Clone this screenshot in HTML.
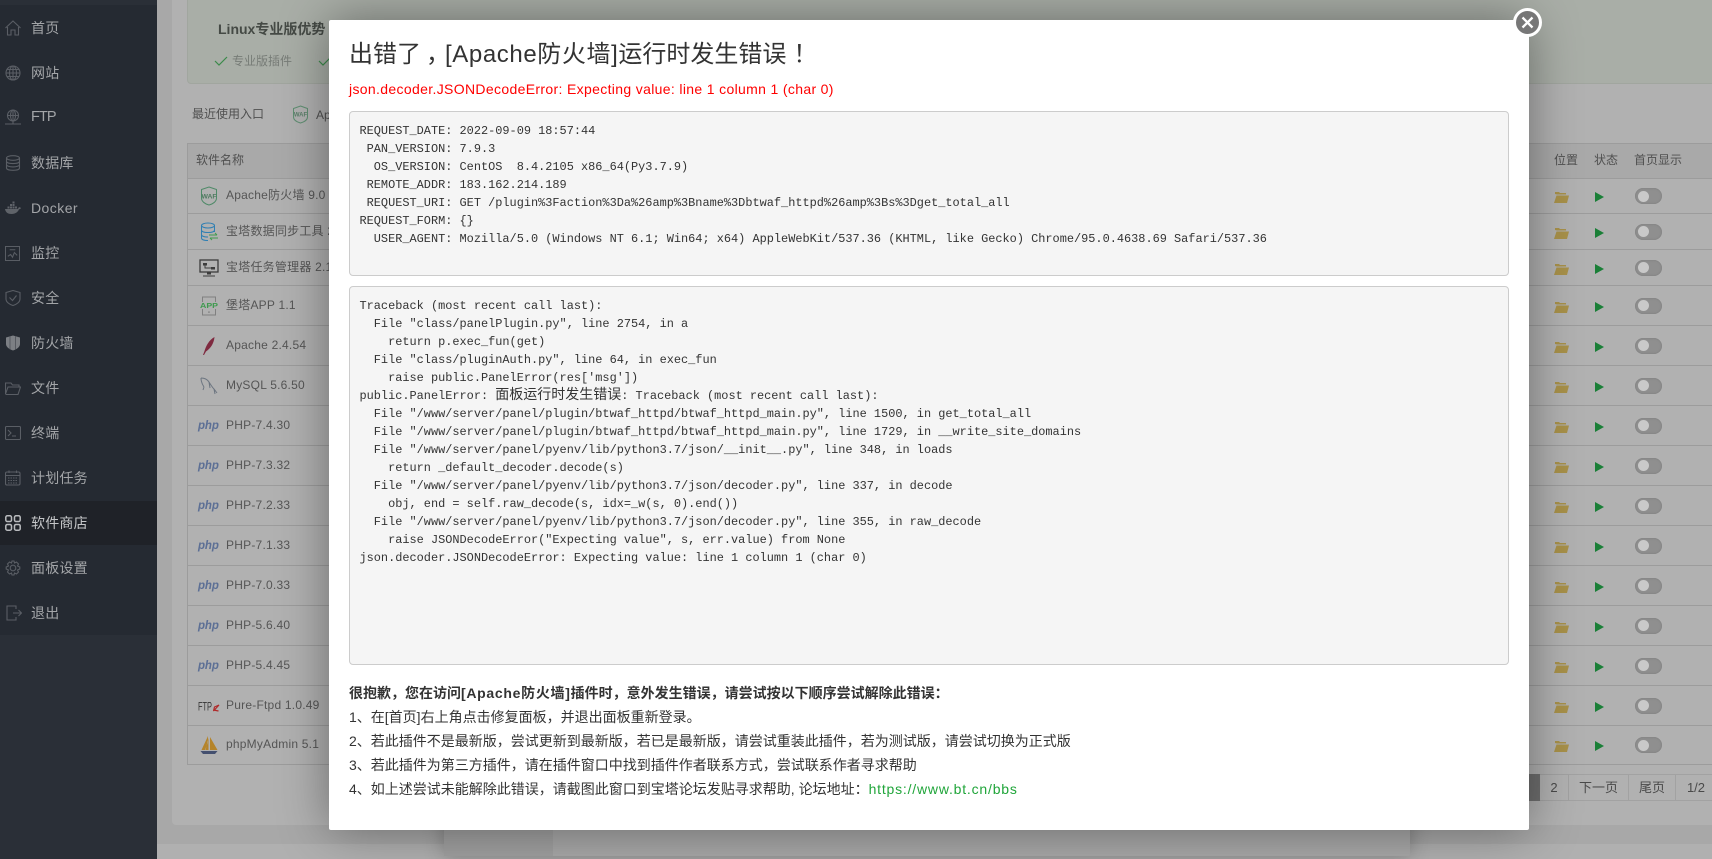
<!DOCTYPE html>
<html lang="zh-CN">
<head>
<meta charset="utf-8">
<title>软件商店</title>
<style>
*{box-sizing:border-box}
html,body{margin:0;padding:0;width:1712px;height:859px;overflow:hidden;background:#a8a8a8;font-family:"Liberation Sans","Noto Sans CJK SC",sans-serif;color:#4c4c4c}
.a{position:absolute}
#side{left:0;top:0;width:157px;height:859px;background:#2a2f37}
#menu{left:0;top:5px;width:157px;height:630px;background:#252a32}
#act{left:0;top:501px;width:157px;height:44px;background:#1f2228}
.m{position:absolute;left:31px;font-size:14px;line-height:20px;color:#a3a5a8;letter-spacing:.2px;white-space:nowrap}
.i{position:absolute;left:5px;width:16px;height:16px;fill:none;stroke:#5a5e65;stroke-width:1.1}
#panel{left:172px;top:-5px;width:1560px;height:830px;background:#b1b1b1;border-radius:4px}
#strip{left:157px;top:844px;width:1555px;height:15px;background:#b0b0b0}
#green{left:187px;top:-4px;width:1540px;height:88px;background:#a9aea7;border:1px solid #a1a69f;border-radius:4px}
.t{position:absolute;white-space:nowrap;font-size:12px;line-height:16px;color:#505050}
#thead{left:187px;top:143px;width:1540px;height:35px;background:#a9a9a9;border:1px solid #9c9c9c;border-bottom:0;border-right:0}
.r{position:absolute;left:187px;width:1540px;border-left:1px solid #9c9c9c;border-top:1px solid #9c9c9c}
.n{position:absolute;left:38px;top:50%;transform:translateY(-50%);font-size:12px;letter-spacing:.22px;color:#555;white-space:nowrap;line-height:16px;padding-bottom:2px}
.f{position:absolute;left:1366px;top:50%;margin-top:-5px;width:15px;height:12px}
.p{position:absolute;left:1407px;top:50%;margin-top:-4px;width:0;height:0;border-left:9px solid #1a7f37;border-top:5.5px solid transparent;border-bottom:5.5px solid transparent}
.s{position:absolute;left:1447px;top:50%;margin-top:-8px;width:27px;height:16px;border-radius:8px;background:#8f8f8f;box-shadow:inset 0 0 2px #7a7a7a}
.s:before{content:"";position:absolute;left:2.5px;top:2.5px;width:11px;height:11px;border-radius:50%;background:#c9c9c9}
.ic{position:absolute;left:11px;top:50%;transform:translateY(-50%);width:20px;height:20px}
.php{position:absolute;left:10px;top:50%;transform:translateY(-50%);font:italic bold 11.5px/14px "Liberation Sans",sans-serif;color:#5c6f95;letter-spacing:-.1px}
.pg{position:absolute;top:774px;height:27px;border:1px solid #a2a2a2;border-left:0;font-size:13px;line-height:25px;text-align:center;color:#4a4a4a;white-space:nowrap}
#back{left:444px;top:780px;width:966px;height:76px;background:#a8a8a8;border-radius:2px;box-shadow:0 0 20px rgba(0,0,0,.25)}
#backl{left:444px;top:780px;width:109px;height:76px;background:#a0a0a0}
#modal{left:329px;top:20px;width:1200px;height:810px;background:#fff;border-radius:2px;box-shadow:0 0 50px rgba(0,0,0,.4)}
#title{left:349px;top:37px;font-size:24px;line-height:36px;color:#333;white-space:nowrap}
#err{left:349px;top:79px;font-size:14px;line-height:20px;color:#f00;white-space:nowrap;letter-spacing:.34px}
pre{position:absolute;left:349px;width:1160px;margin:0;padding:9.5px;background:#f5f5f5;border:1px solid #ccc;border-radius:4px;font-family:"Liberation Mono","Noto Sans CJK SC",monospace;font-size:11.92px;line-height:18px;color:#333;overflow:hidden}
pre span{font-family:"Noto Sans CJK SC",sans-serif;font-size:14px;line-height:14px}
.l{position:absolute;left:349px;font-size:14px;line-height:24px;color:#333;white-space:nowrap}
#close{left:1512.5px;top:7.5px;width:29px;height:29px;border-radius:50%;background:#777;border:3px solid #fff}
</style>
</head>
<body>
<svg width="0" height="0" style="position:absolute">
<defs>
<symbol id="fo" viewBox="0 0 15 12"><path d="M1 3V1h4l1 1h6v1.500H3L1 3z" fill="#a8914a"/><path d="M2.500 4.500H15L13 12H0z" fill="#a8914a"/></symbol>
</defs>
</svg>

<div class="a" id="panel"></div>
<div class="a" id="strip"></div>
<div class="a" id="green"></div>
<div class="t" style="left:218px;top:21px;font-size:14px;line-height:16px;font-weight:bold;color:#454a45">Linux专业版优势</div>
<svg class="a" style="left:214px;top:55px" width="14" height="12" viewBox="0 0 14 12"><path d="M1 6l4 4 8-8" fill="none" stroke="#3b8a4a" stroke-width="1.2"/></svg>
<div class="t" style="left:232px;top:53px;color:#777c77">专业版插件</div>
<svg class="a" style="left:318px;top:55px" width="14" height="12" viewBox="0 0 14 12"><path d="M1 6l4 4 8-8" fill="none" stroke="#3b8a4a" stroke-width="1.2"/></svg>

<div class="t" style="left:192px;top:106px">最近使用入口</div>
<svg class="a" style="left:292px;top:105px" width="17" height="19" viewBox="0 0 17 19"><path d="M8.500 1L15.500 3.500V12C15.500 15 12 17 8.500 18C5 17 1.500 15 1.500 12V3.500Z" fill="none" stroke="#5f8f72" stroke-width="1"/><text x="8.500" y="11.500" font-size="6" font-weight="bold" text-anchor="middle" fill="#5b7f6a" font-family="Liberation Sans">WAF</text></svg>
<div class="t" style="left:316px;top:107px">Ap</div>

<div class="a" id="thead"></div>
<div class="t" style="left:196px;top:152px">软件名称</div>
<div class="t" style="left:1554px;top:152px">位置</div>
<div class="t" style="left:1594px;top:152px">状态</div>
<div class="t" style="left:1634px;top:152px">首页显示</div>

<div class="r" style="top:178px;height:35px"><svg class="ic" viewBox="0 0 20 20"><path d="M10 1L17.500 3.500V12C17.500 15.500 14 18 10 19C6 18 2.500 15.500 2.500 12V3.500Z" fill="none" stroke="#4f8a68" stroke-width="1"/><text x="10" y="12.500" font-size="6.800" font-weight="bold" text-anchor="middle" fill="#4f7a60" font-family="Liberation Sans">WAF</text></svg><div class="n">Apache防火墙 9.0</div><svg class="f"><use href="#fo"/></svg><div class="p"></div><div class="s"></div></div>
<div class="r" style="top:213px;height:36px"><svg class="ic" viewBox="0 0 20 20"><g fill="none" stroke="#2f7fb3" stroke-width="1"><ellipse cx="9" cy="3.500" rx="6.500" ry="2.500"/><path d="M2.500 3.500V16C2.500 17.500 5 18.500 9 18.500M15.500 3.500V10M2.500 8C2.500 9.500 5 10.500 9 10.500S15.500 9.500 15.500 8M2.500 12.500C2.500 14 5 15 9 15"/></g><path d="M10 13h8M16 11l2 2M11 16h8M11 16l2 2" fill="none" stroke="#3f9a4f" stroke-width="1"/></svg><div class="n">宝塔数据同步工具 2</div><svg class="f"><use href="#fo"/></svg><div class="p"></div><div class="s"></div></div>
<div class="r" style="top:249px;height:36px"><svg class="ic" viewBox="0 0 20 20"><rect x="1" y="2" width="18" height="12" fill="none" stroke="#3c3c3c" stroke-width="1.300"/><path d="M4 5h4v2.500H4zM12 9h4v2.500h-4z" fill="#3c3c3c"/><path d="M6 7.500V10h6" fill="none" stroke="#3c3c3c"/><path d="M8 14.500h4v2H8zM4 17.500h12v1H4z" fill="#3c3c3c"/></svg><div class="n">宝塔任务管理器 2.1</div><svg class="f"><use href="#fo"/></svg><div class="p"></div><div class="s"></div></div>
<div class="r" style="top:285px;height:40px"><svg class="ic" viewBox="0 0 20 20"><path d="M3.500 6V1h13v5M3.500 13V19h13V13" fill="none" stroke="#808080" stroke-width="1"/><text x="10" y="12" font-size="7.500" font-weight="bold" text-anchor="middle" fill="#3f9a4f" font-family="Liberation Sans" textLength="18" lengthAdjust="spacingAndGlyphs">APP</text><rect x="9.200" y="15.500" width="1.500" height="1.200" fill="#777"/></svg><div class="n">堡塔APP 1.1</div><svg class="f"><use href="#fo"/></svg><div class="p"></div><div class="s"></div></div>
<div class="r" style="top:325px;height:40px"><svg class="ic" viewBox="0 0 20 20"><path d="M15.500 1C10 4 7 10 5.500 15L4 19 5 19 7 15.500C12 12 15 7 15.500 1z" fill="#7f2a40"/></svg><div class="n">Apache 2.4.54</div><svg class="f"><use href="#fo"/></svg><div class="p"></div><div class="s"></div></div>
<div class="r" style="top:365px;height:40px"><svg class="ic" viewBox="0 0 20 20"><path d="M2 2C5 2 8 3 10 6S13 11 15 13L18 17M2 2C2 5 3 8 5 11M5 11L4 14M15 13L16 18M10 6L11 12" fill="none" stroke="#6c7580" stroke-width="1"/></svg><div class="n">MySQL 5.6.50</div><svg class="f"><use href="#fo"/></svg><div class="p"></div><div class="s"></div></div>
<div class="r" style="top:405px;height:40px"><div class="php">php</div><div class="n">PHP-7.4.30</div><svg class="f"><use href="#fo"/></svg><div class="p"></div><div class="s"></div></div>
<div class="r" style="top:445px;height:40px"><div class="php">php</div><div class="n">PHP-7.3.32</div><svg class="f"><use href="#fo"/></svg><div class="p"></div><div class="s"></div></div>
<div class="r" style="top:485px;height:40px"><div class="php">php</div><div class="n">PHP-7.2.33</div><svg class="f"><use href="#fo"/></svg><div class="p"></div><div class="s"></div></div>
<div class="r" style="top:525px;height:40px"><div class="php">php</div><div class="n">PHP-7.1.33</div><svg class="f"><use href="#fo"/></svg><div class="p"></div><div class="s"></div></div>
<div class="r" style="top:565px;height:40px"><div class="php">php</div><div class="n">PHP-7.0.33</div><svg class="f"><use href="#fo"/></svg><div class="p"></div><div class="s"></div></div>
<div class="r" style="top:605px;height:40px"><div class="php">php</div><div class="n">PHP-5.6.40</div><svg class="f"><use href="#fo"/></svg><div class="p"></div><div class="s"></div></div>
<div class="r" style="top:645px;height:40px"><div class="php">php</div><div class="n">PHP-5.4.45</div><svg class="f"><use href="#fo"/></svg><div class="p"></div><div class="s"></div></div>
<div class="r" style="top:685px;height:40px"><svg class="ic" style="width:22px;left:10px" viewBox="0 0 22 20"><text x="0" y="14.500" font-size="12" fill="#333" font-family="Liberation Sans" textLength="14" lengthAdjust="spacingAndGlyphs">FTP</text><path d="M21 9L15.500 15 16.500 11 21 9zM15.500 14l5 1" fill="none" stroke="#b02a2a" stroke-width="1.200"/></svg><div class="n">Pure-Ftpd 1.0.49</div><svg class="f"><use href="#fo"/></svg><div class="p"></div><div class="s"></div></div>
<div class="r" style="top:725px;height:40px;border-bottom:1px solid #9c9c9c"><svg class="ic" viewBox="0 0 20 20"><path d="M9 1L2.500 15H6L9 7zM9.500 3V15H6.500zM11 2V15H18.500z" fill="#b5842a"/><path d="M1.500 16H18.500L16 19H4z" fill="#44506f"/></svg><div class="n">phpMyAdmin 5.1</div><svg class="f"><use href="#fo"/></svg><div class="p"></div><div class="s"></div></div>

<div class="a" style="left:1529px;top:774px;width:11px;height:27px;background:#6f6f6f"></div>
<div class="pg" style="left:1540px;width:29px">2</div>
<div class="pg" style="left:1569px;width:60px">下一页</div>
<div class="pg" style="left:1629px;width:47px">尾页</div>
<div class="pg" style="left:1676px;width:40px;padding-right:0;border-right:0">1/2</div>

<div class="a" id="side"></div>
<div class="a" id="menu"></div>
<div class="a" id="act"></div>

<svg class="i" style="top:20px" viewBox="0 0 16 16"><path d="M0.500 8L8 1 15.500 8M2.500 7V15H6V10H10V15H13.500V7"/></svg><div class="m" style="top:18px">首页</div>
<svg class="i" style="top:65px" viewBox="0 0 16 16"><circle cx="8" cy="8" r="7"/><ellipse cx="8" cy="8" rx="3.500" ry="7"/><path d="M1 8H15M2 4.500H14M2 11.500H14M8 1V15"/></svg><div class="m" style="top:63px">网站</div>
<svg class="i" style="top:109px" viewBox="0 0 16 16"><circle cx="8" cy="6.500" r="5.500"/><ellipse cx="8" cy="6.500" rx="2.500" ry="5.500"/><path d="M2.500 6.500H13.500M8 1V15M0 15H16"/></svg><div class="m" style="top:107px;letter-spacing:-.9px;font-size:14.500px">FTP</div>
<svg class="i" style="top:155px" viewBox="0 0 16 16"><ellipse cx="8" cy="3" rx="6.500" ry="2.300"/><path d="M1.500 3V13C1.500 14.500 4.500 15.300 8 15.300S14.500 14.500 14.500 13V3M1.500 6.300C1.500 7.800 4.500 8.600 8 8.600S14.500 7.800 14.500 6.300M1.500 9.600C1.500 11 4.500 11.900 8 11.900S14.500 11 14.500 9.600"/></svg><div class="m" style="top:153px">数据库</div>
<svg class="i" style="top:200px;stroke:none;fill:#5f6369" viewBox="0 0 16 16"><path d="M5 4h2v2H5zM7.500 4h2v2h-2zM7.500 1.500h2v2h-2zM2.500 6.500h2v2h-2zM5 6.500h2v2H5zM7.500 6.500h2v2h-2zM10 6.500h2v2h-2zM0 9h12c1 0 1.500-.8 1.800-1.800.8.100 1.600 0 2.200.8-.5 1-1.300 1.300-2 1.300C13 12 10.500 14 6.500 14 3 14 .6 12.500 0 9z"/></svg><div class="m" style="top:198px;letter-spacing:.45px">Docker</div>
<svg class="i" style="top:246px;width:15px;height:15px" viewBox="0 0 16 16"><rect x=".5" y=".5" width="15" height="15"/><path d="M3 11L6 9 8 12 10 7 13 10M5 4h6"/></svg><div class="m" style="top:243px">监控</div>
<svg class="i" style="top:290px" viewBox="0 0 16 16"><path d="M8 .5L15 2.500V9C15 12 11.500 14.500 8 15.500 4.500 14.500 1 12 1 9V2.500Z"/><path d="M4.500 7.500L7.500 10.500 11.500 5.500"/></svg><div class="m" style="top:288px">安全</div>
<svg class="i" style="top:335px;stroke:none;fill:#7c7f84" viewBox="0 0 16 16"><path d="M1 2.500L4.500 1.500 8 .5 11.500 1.500 15 2.500V9C15 12 11.500 14.500 8 15.500 4.500 14.500 1 12 1 9Z"/><path d="M5 1v13.500M10.500 1v13.500" stroke="#4d5057" stroke-width=".8"/></svg><div class="m" style="top:333px">防火墙</div>
<svg class="i" style="top:381px" viewBox="0 0 16 16"><path d="M.5 13V2H6L7.500 4H14V6M.5 13L3 6H15.500L13 13.500H.5"/></svg><div class="m" style="top:378px">文件</div>
<svg class="i" style="top:425px" viewBox="0 0 16 16"><rect x=".5" y="1.500" width="15" height="13" rx="1"/><path d="M3 5L6 8 3 11M7 11H11"/></svg><div class="m" style="top:423px">终端</div>
<svg class="i" style="top:470px" viewBox="0 0 16 16"><rect x=".5" y="2" width="14.500" height="13" rx="1.500"/><path d="M.5 5.500H15M4 .5V3M11.500 .5V3"/><path d="M3 8H12.500M3 10.500H12.500M3 13H12.500" stroke-dasharray="1.500 1"/></svg><div class="m" style="top:468px">计划任务</div>
<svg class="i" style="top:515px;stroke:#b9bbbe;stroke-width:1.500" viewBox="0 0 16 16"><rect x=".8" y=".8" width="5.700" height="5.700" rx="1.500"/><rect x="9.500" y=".8" width="5.700" height="5.700" rx="1.500"/><rect x=".8" y="9.500" width="5.700" height="5.700" rx="1.500"/><rect x="9.500" y="9.500" width="5.700" height="5.700" rx="1.500"/></svg><div class="m" style="top:513px;color:#c4c6c8">软件商店</div>
<svg class="i" style="top:560px" viewBox="0 0 16 16"><circle cx="8" cy="8" r="2.800"/><path d="M7 1H9L9.500 3 11.500 2 13.500 4 12.500 6 14.800 7V9L12.500 10 13.500 12 11.500 14 9.500 13 9 15H7L6.500 13 4.500 14 2.500 12 3.500 10 1.200 9V7L3.500 6 2.500 4 4.500 2 6.500 3Z"/></svg><div class="m" style="top:558px">面板设置</div>
<svg class="i" style="top:605px;left:6px" viewBox="0 0 16 16"><path d="M10 4V1H1V15H10V12M7 8H15.500M12.500 5L15.500 8 12.500 11"/></svg><div class="m" style="top:603px">退出</div>

<div class="a" id="back"></div>
<div class="a" id="backl"></div>

<div class="a" id="modal"></div>
<div class="a" id="title">出错了<span style="position:relative;left:5px">，</span><span style="letter-spacing:.6px">[Apache防火墙]</span>运行时发生错误<span style="margin-left:7px">！</span></div>
<div class="a" id="err">json.decoder.JSONDecodeError: Expecting value: line 1 column 1 (char 0)</div>
<pre style="top:111px;height:165px">REQUEST_DATE: 2022-09-09 18:57:44
 PAN_VERSION: 7.9.3
  OS_VERSION: CentOS  8.4.2105 x86_64(Py3.7.9)
 REMOTE_ADDR: 183.162.214.189
 REQUEST_URI: GET /plugin%3Faction%3Da%26amp%3Bname%3Dbtwaf_httpd%26amp%3Bs%3Dget_total_all
REQUEST_FORM: {}
  USER_AGENT: Mozilla/5.0 (Windows NT 6.1; Win64; x64) AppleWebKit/537.36 (KHTML, like Gecko) Chrome/95.0.4638.69 Safari/537.36</pre>
<pre style="top:286px;height:379px">Traceback (most recent call last):
  File "class/panelPlugin.py", line 2754, in a
    return p.exec_fun(get)
  File "class/pluginAuth.py", line 64, in exec_fun
    raise public.PanelError(res['msg'])
public.PanelError: <span>面板运行时发生错误</span>: Traceback (most recent call last):
  File "/www/server/panel/plugin/btwaf_httpd/btwaf_httpd_main.py", line 1500, in get_total_all
  File "/www/server/panel/plugin/btwaf_httpd/btwaf_httpd_main.py", line 1729, in __write_site_domains
  File "/www/server/panel/pyenv/lib/python3.7/json/__init__.py", line 348, in loads
    return _default_decoder.decode(s)
  File "/www/server/panel/pyenv/lib/python3.7/json/decoder.py", line 337, in decode
    obj, end = self.raw_decode(s, idx=_w(s, 0).end())
  File "/www/server/panel/pyenv/lib/python3.7/json/decoder.py", line 355, in raw_decode
    raise JSONDecodeError("Expecting value", s, err.value) from None
json.decoder.JSONDecodeError: Expecting value: line 1 column 1 (char 0)</pre>
<div class="l" style="top:680.500px;font-weight:bold">很抱歉，您在访问<span style="letter-spacing:.7px">[Apache防火墙]</span>插件时，意外发生错误，请尝试按以下顺序尝试解除此错误：</div>
<div class="l" style="top:704.500px">1、在[首页]右上角点击修复面板，并退出面板重新登录。</div>
<div class="l" style="top:728.500px">2、若此插件不是最新版，尝试更新到最新版，若已是最新版，请尝试重装此插件，若为测试版，请尝试切换为正式版</div>
<div class="l" style="top:752.500px">3、若此插件为第三方插件，请在插件窗口中找到插件作者联系方式，尝试联系作者寻求帮助</div>
<div class="l" style="top:776.500px">4、如上述尝试未能解除此错误，请截图此窗口到宝塔论坛发贴寻求帮助, 论坛地址：<span style="color:#20a53a;letter-spacing:.8px">https://www.bt.cn/bbs</span></div>

<div class="a" id="close"><svg width="23" height="23" viewBox="0 0 23 23" style="display:block"><path d="M6.500 6.500L16.500 16.500M16.500 6.500L6.500 16.500" stroke="#fff" stroke-width="2.300" fill="none"/></svg></div>
</body>
</html>
